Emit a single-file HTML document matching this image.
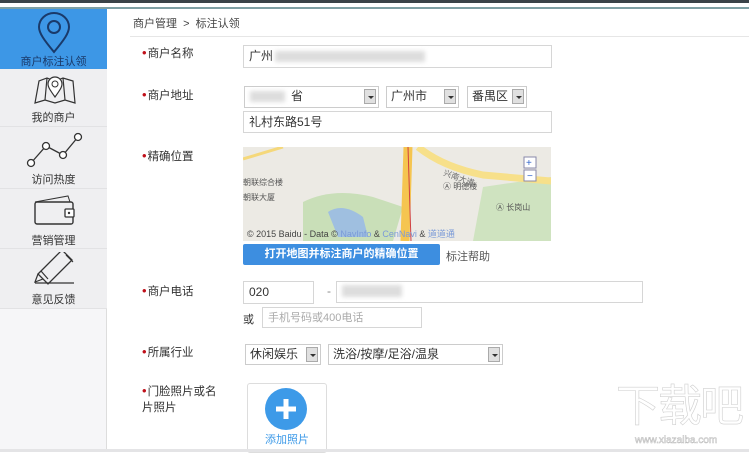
<!DOCTYPE html>
<html><head><meta charset="utf-8"><style>
*{margin:0;padding:0;box-sizing:border-box}
body{width:749px;height:452px;overflow:hidden;background:#fff;font-family:"Liberation Sans","Noto Sans CJK SC",sans-serif;font-size:12px;color:#333;position:relative}
.abs{position:absolute}
.topbar{left:0;top:0;width:749px;height:3px;background:#3a4348}
.topline{left:0;top:7px;width:749px;height:2px;background:#7fa0a4}
.side{left:0;top:9px;width:107px;height:443px;background:#f6f6f8;border-right:1px solid #ddd}
.item{position:absolute;left:0;width:107px;background:#efeff1;border-bottom:1px solid #e2e2e4;text-align:center;font-size:11px;color:#333}
.item span{position:absolute;left:0;width:107px}
.lab{font-size:11.5px;color:#333}
.lab:before{content:"•";color:#c0101a;font-size:13px;margin-right:1px}
.inp{border:1px solid #d6d6d6;background:#fff;font-size:12px;line-height:20px;padding-left:5px}
.sel{border:1px solid #ccc;background:#fff;font-size:12px;line-height:19px;padding-left:4px}
.arr{position:absolute;right:2px;top:2px;width:12px;height:15px;background:#e0e0e0;border:1px solid #aaa}
.arr:after{content:"";position:absolute;left:3px;top:6px;border:3px solid transparent;border-top:3px solid #333}
.blur{background:#ddd;filter:blur(2px)}
</style></head><body>
<div class="abs topbar"></div><div class="abs topline"></div>
<div class="abs side"></div>
<div class="abs" style="left:0;top:9px;width:107px;height:60px;background:#3d97e6"></div>
<svg class="abs" style="left:36px;top:12px" width="36" height="42" viewBox="0 0 36 42"><path d="M18 40 C8 28 3 21 3 15 A15 14 0 0 1 33 15 C33 21 28 28 18 40Z" fill="none" stroke="#1a3a6a" stroke-width="2"/><circle cx="18" cy="15" r="6" fill="none" stroke="#1a3a6a" stroke-width="2"/></svg>
<div class="abs" style="left:0;top:53px;width:107px;text-align:center;font-size:11px;color:#1a3a6a">商户标注认领</div>
<div class="item" style="top:69px;height:58px"><span style="top:40px">我的商户</span></div>
<svg class="abs" style="left:32px;top:75px" width="45" height="30" viewBox="0 0 45 30"><path d="M3 28 L7 6 L15 3 L23 6 L31 3 L41 6 L43 28 L33 25 L23 28 L13 25Z M15 3 L13 25 M31 3 L33 25" fill="none" stroke="#333" stroke-width="1.2"/><path d="M23 22 C18 15 16 12 16 9 A7 7 0 0 1 30 9 C30 12 28 15 23 22Z" fill="#fff" stroke="#333" stroke-width="1.2"/><circle cx="23" cy="9" r="3" fill="none" stroke="#333"/></svg>
<div class="item" style="top:127px;height:62px"><span style="top:44px">访问热度</span></div>
<svg class="abs" style="left:26px;top:132px" width="58" height="36" viewBox="0 0 58 36"><path d="M5 31 L20 14 L37 23 L52 5" fill="none" stroke="#333" stroke-width="1.3"/><g fill="#fff" stroke="#333" stroke-width="1.3"><circle cx="5" cy="31" r="3.5"/><circle cx="20" cy="14" r="3.5"/><circle cx="37" cy="23" r="3.5"/><circle cx="52" cy="5" r="3.5"/></g></svg>
<div class="item" style="top:189px;height:60px"><span style="top:43px">营销管理</span></div>
<svg class="abs" style="left:32px;top:194px" width="46" height="32" viewBox="0 0 46 32"><path d="M3 8 L36 2 L38 8" fill="none" stroke="#333"/><rect x="3" y="8" width="38" height="22" rx="2" fill="none" stroke="#333" stroke-width="1.4"/><rect x="33" y="15" width="9" height="8" rx="1" fill="#fff" stroke="#333" stroke-width="1.3"/><circle cx="37" cy="19" r="1.2" fill="#333"/></svg>
<div class="item" style="top:249px;height:60px"><span style="top:42px">意见反馈</span></div>
<svg class="abs" style="left:32px;top:252px" width="46" height="36" viewBox="0 0 46 36"><path d="M6 27 L30 3 L40 13 L16 37Z" transform="translate(0,-5)" fill="none" stroke="#333" stroke-width="1.3"/><path d="M6 22 L3 30 L11 27 M9 19 L16 27 M34 3 L41 10" fill="none" stroke="#333" stroke-width="1.2"/><path d="M3 31 L42 31" stroke="#333" stroke-width="1.3"/></svg>

<div class="abs" style="left:133px;top:15px;font-size:11px;color:#444">商户管理 &nbsp;&gt;&nbsp; 标注认领</div>
<div class="abs" style="left:130px;top:36px;width:619px;height:1px;background:#e6e6e6"></div>

<div class="abs lab" style="left:142px;top:45px">商户名称</div>
<div class="abs inp" style="left:243px;top:45px;width:309px;height:23px">广州</div>
<div class="abs blur" style="left:275px;top:51px;width:150px;height:11px"></div>

<div class="abs lab" style="left:142px;top:87px">商户地址</div>
<div class="abs sel" style="left:244px;top:86px;width:135px;height:22px"><span style="margin-left:42px">省</span><div class="arr"></div></div>
<div class="abs blur" style="left:250px;top:91px;width:35px;height:11px"></div>
<div class="abs sel" style="left:386px;top:86px;width:73px;height:22px">广州市<div class="arr"></div></div>
<div class="abs sel" style="left:467px;top:86px;width:60px;height:22px">番禺区<div class="arr"></div></div>
<div class="abs inp" style="left:243px;top:111px;width:309px;height:22px">礼村东路51号</div>

<div class="abs lab" style="left:142px;top:148px">精确位置</div>
<svg class="abs" style="left:243px;top:147px" width="308" height="94" viewBox="0 0 308 94">
<rect width="308" height="94" fill="#eceae4"/>
<path d="M60 55 Q90 40 130 50 L160 60 L150 94 L60 94Z" fill="#c9dfb8"/>
<path d="M85 65 Q100 55 120 70 L125 90 L95 90Z" fill="#9fbfe0"/>
<path d="M240 40 L308 30 L308 94 L230 94Z" fill="#cfe3c0"/>
<path d="M0 12 L40 0" stroke="#f5d87a" stroke-width="3"/>
<path d="M165 0 L162 94" stroke="#f5c550" stroke-width="9"/>
<path d="M165 0 L168 94" stroke="#d04040" stroke-width="1"/>
<path d="M175 0 Q200 20 240 28 L308 34" stroke="#f7e08a" stroke-width="7" fill="none"/>
<text x="0" y="38" font-size="8" fill="#555">朝联综合楼</text>
<text x="0" y="53" font-size="8" fill="#555">朝联大厦</text>
<text x="200" y="42" font-size="8" fill="#555">Ⓐ 明德楼</text>
<text x="253" y="63" font-size="8" fill="#555">Ⓐ 长岗山</text>
<text x="200" y="28" font-size="8" fill="#666" transform="rotate(20 200 28)">兴南大道</text>
<rect x="281" y="10" width="12" height="11" fill="#fff" stroke="#88a"/><text x="283" y="19" font-size="10" fill="#36c">+</text>
<rect x="281" y="23" width="12" height="11" fill="#fff" stroke="#88a"/><text x="284" y="32" font-size="10" fill="#36c">−</text>
<text x="4" y="90" font-size="9" fill="#444">© 2015 Baidu - Data © <tspan fill="#7a9ad8">NavInfo</tspan> &amp; <tspan fill="#7a9ad8">CenNavi</tspan> &amp; <tspan fill="#7a9ad8">道道通</tspan></text>
</svg>
<div class="abs" style="left:243px;top:244px;width:197px;height:21px;background:#3d8ee0;border-radius:2px;color:#fff;font-size:11px;font-weight:bold;text-align:center;line-height:21px">打开地图并标注商户的精确位置</div>
<div class="abs" style="left:446px;top:248px;font-size:11px;color:#555">标注帮助</div>

<div class="abs lab" style="left:142px;top:283px">商户电话</div>
<div class="abs inp" style="left:243px;top:281px;width:71px;height:23px">020</div>
<div class="abs" style="left:327px;top:284px;color:#888">-</div>
<div class="abs inp" style="left:336px;top:281px;width:307px;height:22px"></div>
<div class="abs blur" style="left:342px;top:285px;width:60px;height:12px"></div>
<div class="abs" style="left:243px;top:311px;font-size:11px">或</div>
<div class="abs inp" style="left:262px;top:307px;width:160px;height:21px;color:#aaa;font-size:11px">手机号码或400电话</div>

<div class="abs lab" style="left:142px;top:344px">所属行业</div>
<div class="abs sel" style="left:245px;top:344px;width:76px;height:21px">休闲娱乐<div class="arr"></div></div>
<div class="abs sel" style="left:328px;top:344px;width:175px;height:21px">洗浴/按摩/足浴/温泉<div class="arr"></div></div>

<div class="abs lab" style="left:142px;top:383px;width:86px;line-height:16px">门脸照片或名片照片</div>
<div class="abs" style="left:247px;top:383px;width:80px;height:70px;border:1px solid #ddd;border-radius:3px"></div>
<svg class="abs" style="left:264px;top:387px" width="44" height="44" viewBox="0 0 44 44"><circle cx="22" cy="22" r="21" fill="#3d9ae8"/><path d="M22 12 V32 M12 22 H32" stroke="#fff" stroke-width="5"/></svg>
<div class="abs" style="left:247px;top:431px;width:80px;text-align:center;font-size:11px;color:#3d9ae8">添加照片</div>

<div class="abs" style="left:616px;top:385px;font-size:44px;line-height:44px;color:#fff;-webkit-text-stroke:0.6px #d0d0d0;letter-spacing:-2px">下载吧</div>
<div class="abs" style="left:635px;top:435px;font-size:10px;color:#fff;-webkit-text-stroke:0.5px #bbb">www.xiazaiba.com</div>
<div class="abs" style="left:0;top:449px;width:749px;height:3px;background:#e4e4e6"></div>
</body></html>
